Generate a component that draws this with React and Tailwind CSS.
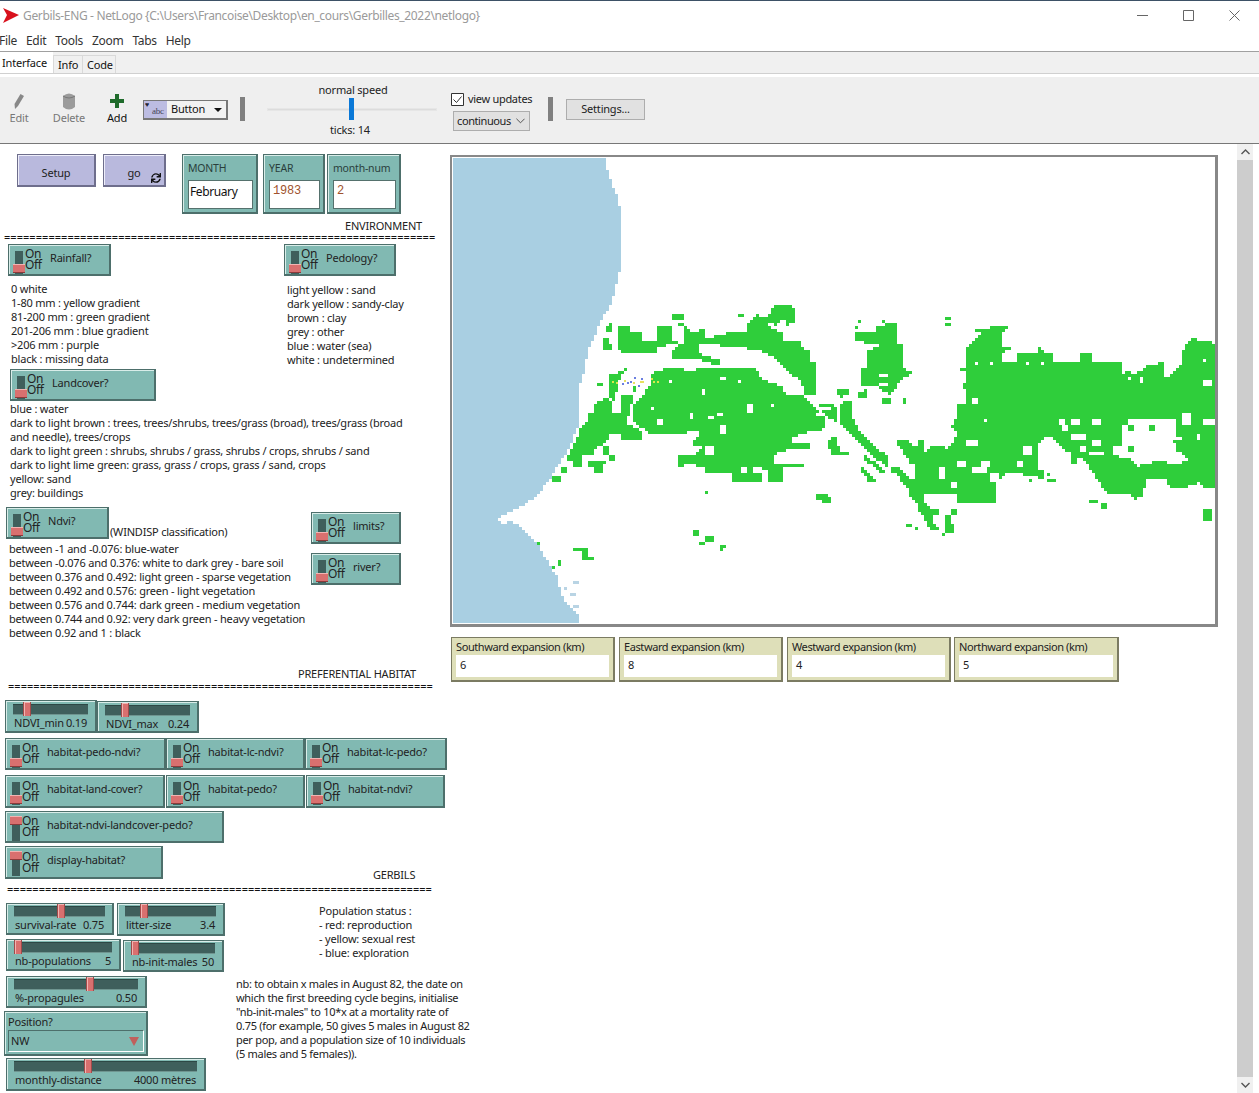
import React from 'react';
import { FaSync } from 'react-icons/fa';

// map shapes traced from the picture, in 3x crop coordinates
const LEFT_GREEN = [
  '170,80 208,80 208,95 245,95 245,120 290,120 290,78 332,78 332,118 358,122 340,135 290,138 288,155 180,155 170,140',
  '130,112 145,112 145,125 160,150 135,155 125,125',
  '140,85 160,60 160,95 140,100',
  '333,40 372,40 372,57 333,57',
  '355,65 372,65 372,75 355,75',
  '372,78 395,95 432,88 435,120 460,110 500,100 560,100 560,140 510,145 470,135 440,135 415,135 415,160 460,175 480,180 480,192 440,190 420,180 400,175 345,175 333,180 333,150 370,130 372,110',
  '560,100 565,65 590,40 610,55 625,45 640,15 695,15 710,40 705,70 680,75 680,55 660,60 650,75 620,70 640,90 665,95 670,120 720,120 730,150 750,150 750,185 768,185 768,280 735,285 720,240 690,220 640,170 600,150 560,150',
  '270,220 320,205 400,210 480,200 590,205 605,235 665,260 680,285 735,290 765,320 790,345 800,385 750,395 700,410 690,430 750,430 750,445 680,450 640,465 640,490 730,490 730,500 668,505 668,545 625,545 625,505 605,510 605,545 517,545 517,520 435,518 435,500 400,495 352,498 352,465 400,465 430,440 400,435 400,420 425,400 400,395 360,400 300,400 270,400 240,380 215,360 215,320 270,260',
  '20,475 55,405 65,375 80,370 80,340 100,340 100,315 130,295 160,300 160,340 180,340 180,290 215,285 215,260 228,260 210,330 200,370 245,395 245,418 180,418 180,400 145,400 145,420 100,450 100,465 65,470 65,500 40,500 35,485',
  '145,222 190,215 180,235 175,265 160,300 145,290',
  '80,483 145,483 125,505 125,518 100,518 100,500 80,495',
  '125,440 145,440 145,465 125,465',
  '145,465 162,465 162,483 145,483',
  '0,502 18,502 18,518 0,518',
  '-24,528 0,528 0,549 -24,549',
  '805,420 830,410 840,455 865,460 860,470 820,465 805,440',
  '770,585 805,585 812,605 790,607 770,597',
  '400,695 417,690 417,708 400,708',
  '435,708 462,708 462,725 435,725',
  '417,725 435,725 435,735 417,735',
  '480,735 497,735 490,755 480,755',
  '36,745 80,745 80,770 98,775 98,780 62,780 62,755 36,755',
  '770,310 825,315 835,370 790,345',
  '845,305 880,305 870,340 905,400 970,460 985,465 985,500 950,480 905,440 870,400 840,370',
  '915,465 980,515 965,520 915,480',
  '905,500 930,525 950,545 925,545 905,515',
  '888,100 950,100 950,78 990,78 990,250 945,262 905,262 905,205 925,200 925,150 960,135 940,135 888,120',
  '835,265 870,265 865,285 845,290 835,285',
  '890,285 925,265 925,293 890,293',
  '968,293 990,293 990,310 968,310',
];

const LEFT_WHITE = [
  [425, 265, 10, 20], [270, 320, 9, 9], [560, 312, 20, 26], [388, 340, 10, 17], [442, 350, 20, 7],
  [470, 340, 20, 7], [288, 357, 18, 18], [480, 375, 18, 28], [435, 438, 28, 27], [540, 500, 22, 18],
  [578, 500, 30, 18], [480, 228, 18, 8], [330, 238, 9, 9], [535, 238, 9, 9], [630, 315, 9, 9],
  [775, 325, 40, 6], [770, 340, 30, 6],
];

const RIGHT_GREEN = [
  '0,75 50,68 55,130 70,135 70,200 95,220 70,235 50,260 30,290 0,262',
  '262,80 280,90 345,80 390,80 365,95 365,140 390,145 365,160 365,182 410,182 410,158 475,158 480,140 490,155 515,155 515,182 598,182 598,158 632,158 632,182 722,182 722,225 745,205 760,225 800,200 850,185 850,235 875,225 905,190 905,155 935,115 1003,130 1003,560 970,560 960,545 925,560 870,560 860,540 800,540 785,590 760,600 750,580 680,580 625,500 625,490 600,470 585,490 570,490 570,460 530,430 510,410 480,420 470,500 495,520 490,535 390,515 370,530 350,550 345,605 235,605 235,580 135,580 135,610 110,605 90,590 90,570 45,520 30,515 55,505 100,540 108,490 90,490 45,420 85,420 118,450 118,420 135,420 135,460 155,440 190,440 205,445 235,400 215,380 235,345 235,315 262,315 262,265 242,260 262,245 262,220 235,205 262,200 262,170 262,140 280,125 300,100',
  '118,610 135,610 155,628 180,628 180,645 155,645 155,670 180,680 180,690 155,690 135,665 135,645 118,640',
  '198,645 215,645 215,670 225,695 198,698',
  '215,628 233,628 233,645 215,645',
  '0,455 25,470 25,490 10,495',
];

const RIGHT_WHITE = [
  [278, 295, 20, 18], [315, 358, 12, 8], [262, 420, 36, 18], [235, 483, 28, 18], [280, 500, 48, 18],
  [300, 483, 28, 18], [330, 520, 28, 25], [215, 545, 18, 18], [180, 500, 18, 32], [425, 440, 30, 25],
  [408, 483, 18, 18], [535, 358, 18, 18], [570, 358, 28, 18], [632, 358, 28, 18], [550, 378, 18, 18],
  [570, 400, 45, 20], [632, 420, 28, 18], [600, 440, 20, 15], [625, 452, 45, 12], [968, 358, 35, 18],
  [950, 405, 12, 20], [740, 230, 12, 12], [780, 235, 9, 18], [285, 182, 9, 9], [330, 182, 9, 9],
  [440, 182, 9, 9], [480, 182, 9, 9], [0, 220, 28, 9], [0, 250, 28, 9], [970, 180, 12, 12], [970, 240, 30, 15],
];

const RIGHT_HOLE = '722,375 740,375 740,360 888,358 888,415 905,415 905,340 932,340 932,375 905,378 905,420 880,420 890,450 925,480 880,495 850,480 770,500 760,480 700,465 695,440 722,438';

const RIGHT_DOTS = [
  [740, 378, 20, 22], [805, 378, 20, 22], [740, 438, 18, 15], [625, 600, 25, 7], [660, 610, 18, 17],
  [505, 538, 27, 7], [505, 520, 10, 8], [445, 538, 8, 7], [82, 672, 18, 8], [108, 682, 8, 8],
  [190, 698, 8, 8], [968, 628, 30, 35], [10, 295, 18, 15], [72, 295, 9, 15], [198, 48, 17, 7], [198, 65, 17, 9],
  [30, 505, 25, 15], [0, 510, 8, 10],
];

const LEFT_DOTS = [
  [435, 572, 10, 10], [888, 82, 12, 10], [895, 58, 12, 9], [965, 58, 12, 10], [110, 250, 16, 12], [195, 203, 9, 9],
  [535, 40, 17, 7], [-69, 729, 6, 6], [-24, 798, 9, 6], [-5, 780, 6, 18],
];

const COAST = '605,158 608,171 612,185 617,195 620,207 620,271 617,281 612,302 600,322 595,336 587,354 585,371 580,385 578,426 568,450 553,474 538,495 523,505 510,512 497,519 502,524 512,521 523,530 537,543 547,560 558,578 561,595 568,605 578,616 578,624 453,624 453,158';

const COAST_FLECKS = [[572, 580, 6, 3], [570, 592, 6, 3], [565, 586, 3, 3], [574, 606, 5, 3]];

const AGENTS = [
  ['#d8e84a', 612, 381], ['#d8e84a', 616, 382], ['#e8e060', 624, 380], ['#6a7ee0', 622, 383], ['#6a7ee0', 627, 382],
  ['#6a7ee0', 630, 381], ['#e8e060', 633, 382], ['#6a7ee0', 634, 377], ['#e8e060', 640, 381], ['#6a7ee0', 638, 385],
  ['#6a7ee0', 641, 378], ['#e8e060', 642, 381], ['#d8e84a', 651, 378], ['#d8e84a', 653, 381], ['#d8e84a', 657, 381],
];

// scanline a polygon into 3px cells, the way the NetLogo patches look
function polyPath(points, ox, oy, k) {
  const pts = points.split(' ').map((p) => {
    const [x, y] = p.split(',').map(Number);
    return [ox + x / k - 453, oy + y / k - 158];
  });
  let d = '';
  for (let row = 0; row * 3 < 466; row++) {
    const yc = row * 3 + 1.5;
    const hits = [];
    pts.forEach((a, i) => {
      const b = pts[(i + 1) % pts.length];
      if ((a[1] <= yc && b[1] > yc) || (b[1] <= yc && a[1] > yc)) {
        hits.push(a[0] + ((yc - a[1]) / (b[1] - a[1])) * (b[0] - a[0]));
      }
    });
    hits.sort((m, n) => m - n);
    for (let i = 0; i + 1 < hits.length; i += 2) {
      const x1 = Math.round(hits[i] / 3) * 3;
      const x2 = Math.round(hits[i + 1] / 3) * 3;
      if (x2 > x1) d += `M${x1} ${row * 3}h${x2 - x1}v3h${x1 - x2}z`;
    }
  }
  return d;
}

function rectPath(rects, ox, oy, k) {
  return rects.map(([x, y, w, h]) => {
    const x1 = Math.round((ox + x / k - 453) / 3) * 3;
    const y1 = Math.round((oy + y / k - 158) / 3) * 3;
    const cw = Math.max(3, Math.round(w / k / 3) * 3);
    const ch = Math.max(3, Math.round(h / k / 3) * 3);
    return `M${x1} ${y1}h${cw}v${ch}h${-cw}z`;
  }).join('');
}

const GREEN = '#2fce3b';
const SEA = '#a9cfe2';

function WorldMap() {
  return (
    <svg viewBox="0 0 762 466" className="block w-[762px] h-[466px] bg-white" shapeRendering="crispEdges">
      <path d={LEFT_GREEN.map((p) => polyPath(p, 560, 300, 3)).join('')} fill={GREEN} />
      <path d={RIGHT_GREEN.map((p) => polyPath(p, 880, 300, 3)).join('')} fill={GREEN} />
      <path d={rectPath(LEFT_WHITE, 560, 300, 3) + rectPath(RIGHT_WHITE, 880, 300, 3) + polyPath(RIGHT_HOLE, 880, 300, 3)} fill="#fff" />
      <path d={rectPath(LEFT_DOTS, 560, 300, 3) + rectPath(RIGHT_DOTS, 880, 300, 3)} fill={GREEN} />
      <path d={polyPath(COAST, 0, 0, 1)} fill={SEA} />
      <path d={rectPath(COAST_FLECKS, 0, 0, 1)} fill="#b9d4e4" />
      {AGENTS.map(([c, x, y], i) => (
        <rect key={i} x={x - 453} y={y - 158} width="2" height="2" fill={c} />
      ))}
    </svg>
  );
}

const TEAL = 'bg-[#81b9b2] border border-[#4d6f6b] border-r-2 border-b-2 shadow-[inset_1px_1px_0_#d9ede9]';

function Switch({ className, label, on }) {
  return (
    <div className={`absolute flex items-center ${TEAL} ${className}`}>
      <div className="relative w-[13px] h-full ml-[3px] shrink-0">
        <div className="absolute left-[3px] top-[6px] w-[8px] h-[23px] bg-[#3f5f5c]" />
        <div className={`absolute left-[1px] w-[12px] h-[9px] bg-[#d9706f] border-t border-t-[#f2b4b2] border-b border-b-[#8c3a3a] ${on ? 'top-[4px]' : 'top-[19px]'}`} />
      </div>
      <div className="w-[25px] shrink-0 flex flex-col -mt-[1px] text-[12px] leading-[11px] tracking-[-0.4px] text-[#222]">
        <span>On</span>
        <span>Off</span>
      </div>
      <span className="text-[#222] -mt-[4px] whitespace-nowrap">{label}</span>
    </div>
  );
}

function Slider({ className, label, value, knob, pad = 'pt-[2px]' }) {
  return (
    <div className={`absolute flex flex-col px-[7px] ${pad} ${TEAL} ${className}`}>
      <div className="relative h-[11px] bg-[#3f5f5c] border-t border-t-[#2d4845] border-b border-b-[#6f9590]">
        <div className={`absolute -top-[3px] w-[8px] h-[14px] bg-[#d9706f] border-x border-x-[#a04a4a] shadow-[inset_1px_1px_0_#f2b4b2] ${knob}`} />
      </div>
      <div className="mt-[1px] flex justify-between px-[1px] text-[#222] whitespace-nowrap">
        <span>{label}</span>
        <span>{value}</span>
      </div>
    </div>
  );
}

function Monitor({ className, label, value, valueClass }) {
  return (
    <div className={`absolute flex flex-col pl-[5px] pr-[3px] pt-[6px] ${TEAL} ${className}`}>
      <span className="text-[10.5px] leading-[14px] text-[#2a3f3c] whitespace-nowrap">{label}</span>
      <div className={`mt-[5px] h-[29px] bg-white border border-[#55716d] ${valueClass}`}>{value}</div>
    </div>
  );
}

function OutputBox({ className, label, value }) {
  return (
    <div className={`absolute flex flex-col px-[4px] pt-[2px] bg-[#dedfb9] border border-[#7b7b62] border-r-2 border-b-2 ${className}`}>
      <span className="text-[#222] whitespace-nowrap tracking-[-0.4px]">{label}</span>
      <div className="mt-[1px] h-[22px] bg-white pl-[4px] leading-[20px] text-[#222]">{value}</div>
    </div>
  );
}

function Note({ className, children }) {
  return <div className={`absolute whitespace-pre text-[#222] ${className}`}>{children}</div>;
}

function Rule({ className, count }) {
  return <div className={`absolute whitespace-nowrap text-[#111] tracking-[0.05px] ${className}`}>{'='.repeat(count)}</div>;
}

function Button({ className, children }) {
  return (
    <div className={`absolute flex items-center justify-center pt-[5px] bg-[#b9b9dd] border border-[#6e6e8c] border-r-2 border-b-2 shadow-[inset_1px_1px_0_#eeeefa] text-[#222] ${className}`}>
      {children}
    </div>
  );
}

function ToolButton({ icon, label, muted }) {
  return (
    <div className={`w-[38px] h-[34px] mt-[14px] flex flex-col items-center justify-between ${muted ? 'text-[#777]' : 'text-[#111]'}`}>
      <div className="h-[20px] flex items-center">{icon}</div>
      <span>{label}</span>
    </div>
  );
}

export default function App() {
  return (
    <div className="w-[1259px] h-[1093px] flex flex-col overflow-hidden bg-white border-t border-t-[#3d5166] font-['Noto_Sans','Open_Sans',sans-serif] text-[11px] leading-[14px] tracking-[-0.2px]">
      <div className="h-[31px] shrink-0 flex items-center pb-[2px]">
        <svg viewBox="0 0 16 15" className="w-[16px] h-[15px] ml-[3px]">
          <polygon points="0,0 16,7 0,15 4,7" fill="#d8101c" />
        </svg>
        <span className="ml-[4px] text-[12px] tracking-[-0.35px] text-[#9a9a9a]">Gerbils-ENG - NetLogo {'{'}C:\Users\Francoise\Desktop\en_cours\Gerbilles_2022\netlogo{'}'}</span>
        <div className="ml-auto mr-[19px] flex items-center gap-[35px]">
          <svg viewBox="0 0 11 11" className="w-[11px] h-[11px]"><path d="M0 5.5h11" stroke="#666" fill="none" /></svg>
          <svg viewBox="0 0 11 11" className="w-[11px] h-[11px]"><path d="M.5.5h10v10H.5z" stroke="#666" fill="none" /></svg>
          <svg viewBox="0 0 11 11" className="w-[11px] h-[11px]"><path d="M.5.5l10 10M10.5.5l-10 10" stroke="#666" fill="none" /></svg>
        </div>
      </div>

      <div className="h-[20px] shrink-0 flex items-center gap-[9px] pb-[2px] text-[12px] tracking-[-0.3px] text-[#333] border-b border-b-[#a0a0a0]">
        <span className="-ml-[1px]">File</span>
        <span>Edit</span>
        <span>Tools</span>
        <span>Zoom</span>
        <span>Tabs</span>
        <span>Help</span>
      </div>

      <div className="h-[22px] shrink-0 flex items-end bg-[#f0f0f0] border-b border-b-[#d0d0d0] text-[#111]">
        <div className="h-[21px] w-[53px] pl-[2px] pt-[4px] bg-white">Interface</div>
        <div className="h-[18px] w-[30px] pl-[4px] pt-[2px] border border-[#d9d9d9] border-b-0">Info</div>
        <div className="h-[18px] w-[33px] pl-[4px] pt-[2px] border border-l-0 border-[#d9d9d9] border-b-0">Code</div>
      </div>

      <div className="h-[70px] shrink-0 pt-[3px] bg-white">
        <div className="h-[67px] flex items-start bg-[#efefef] border-b border-b-[#777]">
          <ToolButton
            muted
            label="Edit"
            icon={
              <svg viewBox="0 0 10 15" className="w-[10px] h-[15px]">
                <path d="M6.5 0L10 2 4 12 1 15 .5 10z" fill="#888" />
              </svg>
            }
          />
          <div className="w-[12px]" />
          <ToolButton
            muted
            label="Delete"
            icon={
              <svg viewBox="0 0 12 17" className="w-[12px] h-[17px]">
                <path d="M0 3q6-5 12 0v11q-6 5-12 0z" fill="#9b9b9b" />
                <path d="M0 3q6 4 12 0" stroke="#777" fill="none" />
              </svg>
            }
          />
          <div className="w-[10px]" />
          <ToolButton
            label="Add"
            icon={
              <svg viewBox="0 0 14 14" className="w-[14px] h-[14px]">
                <path d="M5 0h4v5h5v4H9v5H5V9H0V5h5z" fill="#1f6b2b" />
              </svg>
            }
          />
          <div className="mt-[23px] ml-[7px] w-[85px] h-[20px] flex items-center border border-[#777] border-b-2 border-r-2 bg-[#f2f2f2] text-[#111]">
            <div className="relative w-[23px] h-full bg-[#bcbce2] shrink-0">
              <span className="absolute left-[1px] -top-[1px] text-[7px] leading-[10px] text-[#223]">♥</span>
              <span className="absolute left-[8px] top-[5px] text-[9px] leading-[10px] font-['Liberation_Serif',serif] text-[#445]">abc</span>
            </div>
            <span className="ml-[4px] -mt-[2px]">Button</span>
            <div className="ml-auto mr-[4px] border-x-[4px] border-x-transparent border-t-[4px] border-t-[#111]" />
          </div>
          <div className="mt-[20px] ml-[12px] w-[5px] h-[24px] bg-[#808080]" />
          <div className="ml-[22px] w-[170px] mt-[6px] flex flex-col items-center text-[#222]">
            <span className="ml-[2px]">normal speed</span>
            <div className="relative w-full h-[3px] mt-[11px] bg-[#dcdcdc] border border-[#e6e6e6]">
              <div className="absolute left-[81px] -top-[11px] w-[5px] h-[22px] bg-[#0a78d7]" />
            </div>
            <span className="mt-[12px] -ml-[4px]">ticks: 14</span>
          </div>
          <div className="ml-[14px] w-[85px] mt-[15px] text-[#222]">
            <div className="flex items-center gap-[4px] whitespace-nowrap">
              <svg viewBox="0 0 13 13" className="w-[13px] h-[13px] shrink-0">
                <path d="M.5.5h12v12H.5z" fill="#fff" stroke="#333" />
                <path d="M2.5 6.5l3 3 5-6" fill="none" stroke="#333" />
              </svg>
              <span className="tracking-[-0.3px]">view updates</span>
            </div>
            <div className="mt-[5px] ml-[2px] w-[77px] h-[20px] flex items-center pl-[3px] bg-[#e1e1e1] border border-[#adadad] tracking-[-0.4px]">
              continuous
              <svg viewBox="0 0 10 6" className="ml-auto mr-[4px] w-[9px] h-[6px]"><path d="M.5.5l4.5 4.5L9.5.5" fill="none" stroke="#444" /></svg>
            </div>
          </div>
          <div className="mt-[20px] ml-[12px] w-[5px] h-[24px] bg-[#808080]" />
          <div className="mt-[22px] ml-[13px] w-[79px] h-[21px] flex items-center justify-center pb-[2px] bg-[#e1e1e1] border border-[#adadad] text-[#222]">Settings...</div>
        </div>
      </div>

      <div className="flex-1 flex min-h-0">
        <div className="relative flex-1 min-w-0">
          <Button className="left-[17px] top-[10px] w-[79px] h-[33px]">Setup</Button>
          <Button className="left-[103px] top-[10px] w-[63px] h-[33px]">
            go
            <FaSync className="absolute right-[3px] bottom-[2px] text-[#111]" size={10} />
          </Button>
          <Monitor className="left-[182px] top-[10px] w-[76px] h-[60px]" label="MONTH" value="February" valueClass="pl-[1px] text-[12px] leading-[22px] tracking-[-0.4px] text-[#111]" />
          <Monitor className="left-[263px] top-[10px] w-[62px] h-[60px]" label="YEAR" value="1983" valueClass="pl-[3px] leading-[20px] text-[12px] font-['Liberation_Mono',monospace] text-[#a0522d]" />
          <Monitor className="left-[327px] top-[10px] w-[74px] h-[60px]" label="month-num" value="2" valueClass="pl-[3px] leading-[20px] text-[12px] font-['Liberation_Mono',monospace] text-[#a0522d]" />

          <Note className="left-[345px] top-[75px]">ENVIRONMENT</Note>
          <Rule className="left-[4px] top-[86px]" count={68} />
          <Switch className="left-[8px] top-[100px] w-[103px] h-[32px]" label="Rainfall?" />
          <Switch className="left-[284px] top-[100px] w-[112px] h-[32px]" label="Pedology?" />
          <Note className="left-[11px] top-[138px]">{`0 white
1-80 mm : yellow gradient
81-200 mm : green gradient
201-206 mm : blue gradient
>206 mm : purple
black : missing data`}</Note>
          <Note className="left-[287px] top-[139px]">{`light yellow : sand
dark yellow : sandy-clay
brown : clay
grey : other
blue : water (sea)
white : undetermined`}</Note>
          <Switch className="left-[10px] top-[225px] w-[146px] h-[32px]" label="Landcover?" />
          <Note className="left-[10px] top-[258px]">{`blue : water
dark to light brown : trees, trees/shrubs, trees/grass (broad), trees/grass (broad
and needle), trees/crops
dark to light green : shrubs, shrubs / grass, shrubs / crops, shrubs / sand
dark to light lime green: grass, grass / crops, grass / sand, crops
yellow: sand
grey: buildings`}</Note>
          <Switch className="left-[6px] top-[363px] w-[103px] h-[32px]" label="Ndvi?" />
          <Note className="left-[110px] top-[381px]">(WINDISP classification)</Note>
          <Switch className="left-[311px] top-[368px] w-[90px] h-[32px]" label="limits?" />
          <Switch className="left-[311px] top-[409px] w-[90px] h-[32px]" label="river?" />
          <Note className="left-[9px] top-[398px]">{`between -1 and -0.076: blue-water
between -0.076 and 0.376: white to dark grey - bare soil
between 0.376 and 0.492: light green - sparse vegetation
between 0.492 and 0.576: green - light vegetation
between 0.576 and 0.744: dark green - medium vegetation
between 0.744 and 0.92: very dark green - heavy vegetation
between 0.92 and 1 : black`}</Note>

          <Note className="left-[298px] top-[523px]">PREFERENTIAL HABITAT</Note>
          <Rule className="left-[8px] top-[535px]" count={67} />
          <Slider pad="pt-[3px]" className="left-[5px] top-[556px] w-[92px] h-[33px]" label="NDVI_min" value="0.19" knob="left-[10px]" />
          <Slider pad="pt-[3px]" className="left-[97px] top-[557px] w-[102px] h-[32px]" label="NDVI_max" value="0.24" knob="left-[16px]" />
          <Switch className="left-[5px] top-[594px] w-[161px] h-[32px]" label="habitat-pedo-ndvi?" />
          <Switch className="left-[166px] top-[594px] w-[139px] h-[32px]" label="habitat-lc-ndvi?" />
          <Switch className="left-[305px] top-[594px] w-[142px] h-[32px]" label="habitat-lc-pedo?" />
          <Switch className="left-[5px] top-[631px] w-[160px] h-[33px]" label="habitat-land-cover?" />
          <Switch className="left-[166px] top-[631px] w-[139px] h-[33px]" label="habitat-pedo?" />
          <Switch className="left-[306px] top-[631px] w-[139px] h-[33px]" label="habitat-ndvi?" />
          <Switch on className="left-[5px] top-[667px] w-[219px] h-[32px]" label="habitat-ndvi-landcover-pedo?" />
          <Switch on className="left-[5px] top-[702px] w-[158px] h-[33px]" label="display-habitat?" />

          <Note className="left-[373px] top-[724px]">GERBILS</Note>
          <Rule className="left-[7px] top-[738px]" count={67} />
          <Slider className="left-[6px] top-[759px] w-[108px] h-[32px]" label="survival-rate" value="0.75" knob="left-[43px]" />
          <Slider className="left-[117px] top-[759px] w-[108px] h-[33px]" label="litter-size" value="3.4" knob="left-[15px]" />
          <Slider className="left-[6px] top-[795px] w-[115px] h-[32px]" label="nb-populations" value="5" knob="left-0" />
          <Slider className="left-[123px] top-[796px] w-[101px] h-[32px]" label="nb-init-males" value="50" knob="left-0" />
          <Slider className="left-[6px] top-[832px] w-[141px] h-[32px]" label="%-propagules" value="0.50" knob="left-[72px]" />
          <div className={`absolute left-[4px] top-[867px] w-[144px] h-[45px] pl-[3px] pt-[3px] text-[#222] ${TEAL}`}>
            <span>Position?</span>
            <div className="relative mt-[1px] w-[136px] h-[22px] flex items-center pl-[2px] border border-t-[#4d6f6b] border-l-[#4d6f6b] border-r-white border-b-white">
              NW
              <div className="absolute right-[4px] top-[6px] border-x-[5px] border-x-transparent border-t-[9px] border-t-[#c0605c]" />
            </div>
          </div>
          <Slider className="left-[6px] top-[914px] w-[200px] h-[33px]" label="monthly-distance" value="4000 mètres" knob="left-[70px]" />

          <Note className="left-[319px] top-[760px]">{`Population status :
- red: reproduction
- yellow: sexual rest
- blue: exploration`}</Note>
          <Note className="left-[236px] top-[833px] tracking-[-0.3px]">{`nb: to obtain x males in August 82, the date on
which the first breeding cycle begins, initialise
"nb-init-males" to 10*x at a mortality rate of
0.75 (for example, 50 gives 5 males in August 82
per pop, and a population size of 10 individuals
(5 males and 5 females)).`}</Note>

          <div className="absolute left-[450px] top-[11px] w-[768px] h-[472px] border-t-2 border-l-2 border-r-[3px] border-b-[3px] border-[#888]">
            <div className="pl-px pt-px"><WorldMap /></div>
          </div>
          <OutputBox className="left-[451px] top-[493px] w-[164px] h-[45px]" label="Southward expansion (km)" value="6" />
          <OutputBox className="left-[619px] top-[493px] w-[164px] h-[45px]" label="Eastward expansion (km)" value="8" />
          <OutputBox className="left-[787px] top-[493px] w-[164px] h-[45px]" label="Westward expansion (km)" value="4" />
          <OutputBox className="left-[954px] top-[493px] w-[165px] h-[45px]" label="Northward expansion (km)" value="5" />
        </div>

        <div className="w-[16px] shrink-0 flex flex-col bg-[#f0f0f0] mr-[6px]">
          <div className="h-[16px] flex items-center justify-center">
            <svg viewBox="0 0 9 6" className="w-[9px] h-[6px]"><path d="M.5 5L4.5 1l4 4" fill="none" stroke="#555" strokeWidth="1.4" /></svg>
          </div>
          <div className="flex-1 bg-[#cdcdcd]" />
          <div className="h-[16px] flex items-center justify-center">
            <svg viewBox="0 0 9 6" className="w-[9px] h-[6px]"><path d="M.5 1l4 4 4-4" fill="none" stroke="#555" strokeWidth="1.4" /></svg>
          </div>
        </div>
      </div>
    </div>
  );
}
